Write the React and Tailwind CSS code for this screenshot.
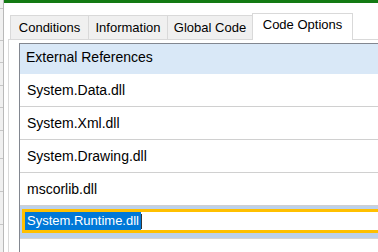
const tabs = [
  { label: 'Conditions', w: 'w-[78px]' },
  { label: 'Information', w: 'w-[79px]' },
  { label: 'Global Code', w: 'w-[85px]' },
]

const refs = ['System.Data.dll', 'System.Xml.dll', 'System.Drawing.dll', 'mscorlib.dll']

// the sheet grid peeking out at the left edge
const gridRows = ['h-[9px]', 'h-[32px]', 'h-[22px]', 'h-[23px]', 'h-[22px]', 'h-[23px]', 'h-[28px]', 'h-[33px]', 'h-[33px]']

export default function App() {
  return (
    <div className="flex w-[378px] h-[252px] overflow-hidden bg-white text-black font-['Liberation_Sans',Arial,sans-serif]">
      <div className="w-[3px] shrink-0 bg-[#f0f0f0] flex flex-col">
        {gridRows.map((h, i) => (
          <div key={i} className={`${h} shrink-0 border-b border-[#c6c6c6]`} />
        ))}
      </div>
      <div className="w-px shrink-0 bg-[#b9b9b9]" />

      <div className="flex-1 min-w-0 flex flex-col">
        <div className="h-[3px] shrink-0 bg-[#137a13]" />

        <div className="flex-1 flex flex-col pl-[4px] pt-[10px]">
          {/* tab strip */}
          <div className="flex items-end h-[26px] pl-[2px] text-[13px] leading-4">
            {tabs.map((t) => (
              <div
                key={t.label}
                className={`${t.w} h-[24px] shrink-0 bg-[#f0f0f0] border-l border-t border-[#d9d9d9] pt-[4px] text-center whitespace-nowrap`}
              >
                {t.label}
              </div>
            ))}
            <div className="relative z-10 w-[101px] h-[27px] -mb-px shrink-0 bg-white border-x border-t border-[#d9d9d9] pt-[3px] text-center whitespace-nowrap">
              Code Options
            </div>
          </div>

          {/* tab page, runs on past the window's right edge */}
          <div className="flex-1 -mr-[40px] border-l border-t border-[#d9d9d9] pl-[10px] pt-[3px]">
            <div className="h-full border-l border-t border-[#828790] text-[14px] leading-4">
              <div className="h-[30px] bg-[#d9e8f7] pl-[6px] pt-[5px] whitespace-nowrap">External References</div>
              {refs.map((r) => (
                <div key={r} className="h-[33px] flex items-center pl-[7px] border-b border-[#d0d0d0] whitespace-nowrap">
                  {r}
                </div>
              ))}
              <div className="h-[33px] bg-[#bcd1ec] border-b border-[#d6d6d6] pl-[2px] pt-[3px]">
                <div className="h-[24px] border-[3px] border-[#ffc000] bg-white flex items-center text-[13px]">
                  <span className="bg-[#0078d7] text-white h-full flex items-center pl-[2px] pr-[2px] whitespace-nowrap">
                    System.Runtime.dll
                  </span>
                  <span className="w-px h-[15px] bg-[#333]" />
                </div>
              </div>
            </div>
          </div>
        </div>
      </div>
    </div>
  )
}
